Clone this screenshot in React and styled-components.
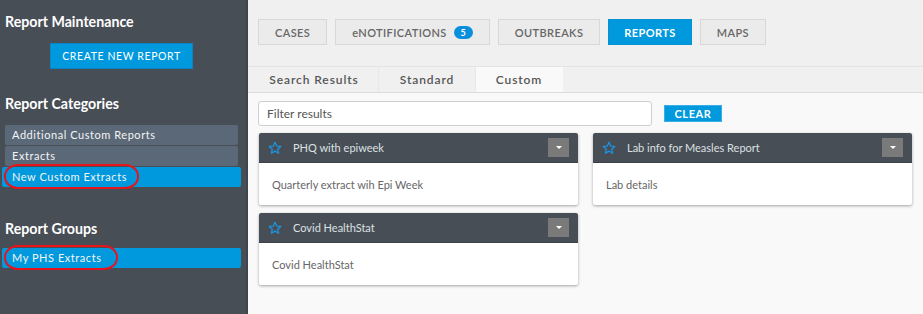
import React from "react";
import styled, { createGlobalStyle } from "styled-components";

const Global = createGlobalStyle`
  html, body { margin: 0; padding: 0; }
  body {
    font-family: Lato, "Open Sans", "Liberation Sans", sans-serif;
    background: #f0f0f0;
    overflow: hidden;
  }
`;

const navItems = [
  { label: "CASES" },
  { label: "eNOTIFICATIONS", badge: 5 },
  { label: "OUTBREAKS" },
  { label: "REPORTS", active: true },
  { label: "MAPS" },
];

const subTabs = [
  { label: "Search Results", width: 128 },
  { label: "Standard", width: 96 },
  { label: "Custom", width: 86, active: true },
];

const reports = [
  { title: "PHQ with epiweek", desc: "Quarterly extract wih Epi Week" },
  { title: "Lab info for Measles Report", desc: "Lab details" },
  { title: "Covid HealthStat", desc: "Covid HealthStat" },
];

function Star() {
  return (
    <svg width="14" height="14" viewBox="0 0 24 24">
      <polygon
        points="12,2 14.9,8.6 22,9.3 16.6,14 18.2,21 12,17.3 5.8,21 7.4,14 2,9.3 9.1,8.6"
        fill="none"
        stroke="#1b93e0"
        strokeWidth="2.2"
        strokeLinejoin="round"
      />
    </svg>
  );
}

export default function App() {
  return (
    <Page>
      <Global />
      <Sidebar>
        <Heading>Report Maintenance</Heading>
        <CreateRow>
          <CreateButton>CREATE NEW REPORT</CreateButton>
        </CreateRow>
        <Heading $top={26}>Report Categories</Heading>
        <List $top={12}>
          <ListItem>Additional Custom Reports</ListItem>
          <ListItem>Extracts</ListItem>
          <ListItem $active>
            New Custom Extracts
            <Marker $w={135} />
          </ListItem>
        </List>
        <Heading $top={33}>Report Groups</Heading>
        <List $top={10}>
          <ListItem $active>
            My PHS Extracts
            <Marker $w={114} />
          </ListItem>
        </List>
      </Sidebar>
      <Main>
        <Nav>
          {navItems.map((n) => (
            <NavButton key={n.label} $active={n.active}>
              {n.label}
              {n.badge && <Badge>{n.badge}</Badge>}
            </NavButton>
          ))}
        </Nav>
        <SubTabs>
          {subTabs.map((t) => (
            <SubTab key={t.label} $w={t.width} $active={t.active}>
              {t.label}
            </SubTab>
          ))}
        </SubTabs>
        <Content>
          <FilterRow>
            <FilterInput placeholder="Filter results" />
            <ClearButton>CLEAR</ClearButton>
          </FilterRow>
          <Cards>
            {reports.map((r) => (
              <Card key={r.title}>
                <CardHeader>
                  <Star />
                  <CardTitle>{r.title}</CardTitle>
                  <Caret>
                    <CaretShape />
                  </Caret>
                </CardHeader>
                <CardBody>{r.desc}</CardBody>
              </Card>
            ))}
          </Cards>
        </Content>
      </Main>
    </Page>
  );
}

const Page = styled.div`
  display: flex;
  width: 923px;
  height: 314px;
`;

const Sidebar = styled.div`
  width: 248px;
  flex-shrink: 0;
  background: #474e56;
  border-right: 2px solid #3f454c;
  box-sizing: border-box;
  padding: 13px 0 0 0;
`;

const Heading = styled.div`
  color: #fff;
  font-weight: 700;
  font-size: 14.2px;
  line-height: 18px;
  padding-left: 5px;
  margin-top: ${({ $top }) => ($top ? `${$top}px` : "0")};
`;

const CreateRow = styled.div`
  display: flex;
  padding-left: 50px;
  margin-top: 12px;
`;

const CreateButton = styled.div`
  width: 143px;
  height: 26px;
  background: #0099dd;
  border: 1px solid #0a84c4;
  box-sizing: border-box;
  color: #fff;
  font-size: 10.5px;
  letter-spacing: 0.6px;
  display: flex;
  align-items: center;
  justify-content: center;
`;

const List = styled.div`
  display: flex;
  flex-direction: column;
  gap: 1px;
  margin-top: ${({ $top }) => $top}px;
`;

const ListItem = styled.div`
  position: relative;
  height: 20px;
  line-height: 20px;
  margin: ${({ $active }) => ($active ? "0 5px 0 2px" : "0 8px 0 5px")};
  padding-left: ${({ $active }) => ($active ? "10px" : "7px")};
  background: ${({ $active }) => ($active ? "#0099dd" : "#5b6878")};
  border-radius: 2px;
  color: #f4f4f4;
  font-size: 11px;
  letter-spacing: 0.55px;
`;

const Marker = styled.span`
  position: absolute;
  left: 2px;
  top: -3px;
  width: ${({ $w }) => $w}px;
  height: 25px;
  border: 2.5px solid #e8141c;
  border-radius: 14px / 12px;
  box-sizing: border-box;
`;

const Main = styled.div`
  flex: 1;
  display: flex;
  flex-direction: column;
  background: #f0f0f0;
`;

const Nav = styled.div`
  display: flex;
  gap: 8px;
  padding: 19px 0 0 10px;
`;

const NavButton = styled.div`
  height: 26px;
  box-sizing: border-box;
  padding: 0 ${({ $active }) => ($active ? "15px" : "16px")};
  display: flex;
  align-items: center;
  gap: 7px;
  background: ${({ $active }) => ($active ? "#0099dd" : "#ebebeb")};
  border: 1px solid ${({ $active }) => ($active ? "#0a8fd0" : "#d8d8d8")};
  color: ${({ $active }) => ($active ? "#fff" : "#666")};
  font-weight: ${({ $active }) => ($active ? 700 : 600)};
  font-size: 11px;
  letter-spacing: 0.4px;
`;

const Badge = styled.span`
  background: #0a8fdc;
  color: #fff;
  font-size: 9px;
  font-weight: 700;
  letter-spacing: 0;
  border-radius: 8px;
  height: 13px;
  min-width: 19px;
  display: inline-flex;
  align-items: center;
  justify-content: center;
`;

const SubTabs = styled.div`
  display: flex;
  margin-top: 21px;
  border-top: 1px solid #e4e4e4;
  padding-left: 2px;
`;

const SubTab = styled.div`
  width: ${({ $w }) => $w}px;
  height: 25px;
  display: flex;
  align-items: center;
  justify-content: center;
  color: #555;
  font-size: 12px;
  font-weight: 600;
  letter-spacing: 0.9px;
  background: ${({ $active }) => ($active ? "#f9f9f9" : "#f0f0f0")};
  border-right: 1px solid ${({ $active }) => ($active ? "transparent" : "#e8e8e8")};
`;

const Content = styled.div`
  flex: 1;
  background: #f9f9f9;
  border-top: 1px solid #dcdcdc;
  padding: 8px 10px 0 10px;
`;

const FilterRow = styled.div`
  display: flex;
  align-items: center;
  gap: 12px;
`;

const FilterInput = styled.input`
  width: 394px;
  height: 25px;
  box-sizing: border-box;
  border: 1px solid #ccd0d4;
  border-radius: 3px;
  background: #fff;
  padding: 0 8px;
  font-family: inherit;
  font-size: 12px;
  outline: none;
  &::placeholder {
    color: #555;
  }
`;

const ClearButton = styled.div`
  width: 58px;
  height: 17px;
  background: #0099dd;
  border: 1px solid #3aaee6;
  box-sizing: border-box;
  color: #fff;
  font-size: 11px;
  font-weight: 700;
  letter-spacing: 0.6px;
  display: flex;
  align-items: center;
  justify-content: center;
`;

const Cards = styled.div`
  display: grid;
  grid-template-columns: 319px 319px;
  column-gap: 15px;
  row-gap: 8px;
  margin-top: 7px;
  padding-left: 1px;
`;

const Card = styled.div`
  background: #fff;
  box-shadow: 0 1px 3px rgba(0, 0, 0, 0.35);
  border-radius: 2px;
`;

const CardHeader = styled.div`
  height: 29px;
  background: #474e56;
  border-radius: 2px 2px 0 0;
  display: flex;
  align-items: center;
  padding: 0 9px 0 9px;
  border-bottom: 1px solid #3b4147;
`;

const CardTitle = styled.div`
  flex: 1;
  margin-left: 11px;
  color: #dde0e3;
  font-size: 11px;
`;

const Caret = styled.div`
  width: 21px;
  height: 19px;
  background: #7a7a7a;
  display: flex;
  align-items: center;
  justify-content: center;
`;

const CaretShape = styled.span`
  width: 0;
  height: 0;
  border-left: 3.5px solid transparent;
  border-right: 3.5px solid transparent;
  border-top: 3px solid #fff;
`;

const CardBody = styled.div`
  height: 42px;
  display: flex;
  align-items: center;
  padding-left: 13px;
  color: #666;
  font-size: 11px;
`;
